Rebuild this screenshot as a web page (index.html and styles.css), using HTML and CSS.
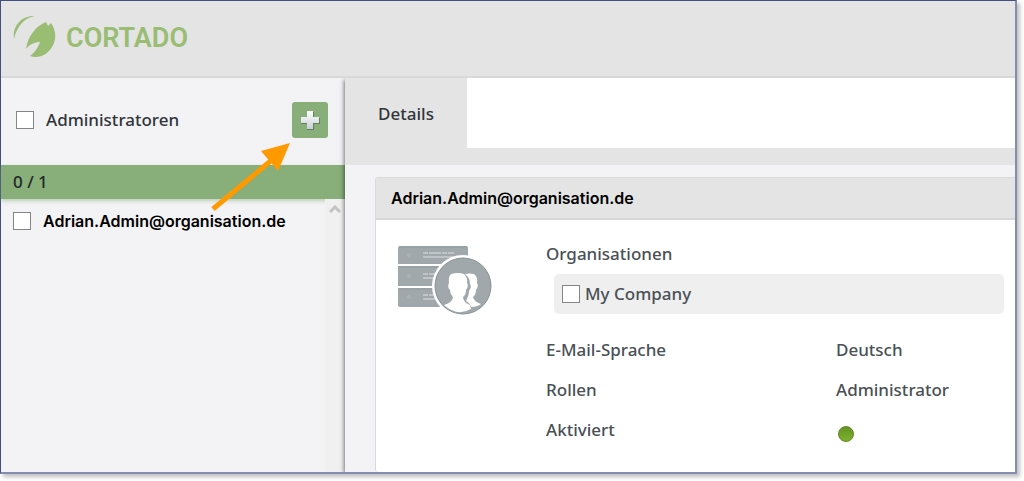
FILE: index.html
```html
<!DOCTYPE html>
<html lang="de">
<head>
    <meta charset="UTF-8">
    <meta name="viewport" content="width=device-width, initial-scale=1.0">
    <title>Cortado - Administratoren</title>
    <link rel="stylesheet" href="styles.css">
</head>
<body>
    <div class="window">
        <header class="header">
            <svg class="logo" viewBox="0 0 44 44" aria-hidden="true">
                <path fill="#99bd72" d="M1 25C-1 12 9 1 22 2C11 4 4 12 1 25Z"/>
                <path fill="#99bd72" d="M13 35C15 22 23 12 33 8L35 12L38 9C43 16 44 25 39 33C34 41 26 45 17 42C21 39 25 34 27 28C22 28 17 30 13 35Z"/>
            </svg>
            <span class="brand">CORTADO</span>
        </header>
        <div class="content">
            <aside class="sidebar">
                <div class="sidebar-top">
                    <label class="check"><input type="checkbox"> <span>Administratoren</span></label>
                    <button class="add" type="button" aria-label="Administrator hinzufügen">
                        <svg viewBox="0 0 20 20" aria-hidden="true">
                            <defs>
                                <linearGradient id="plus" x1="0" y1="0" x2="0" y2="1">
                                    <stop offset="0" stop-color="#fff"/>
                                    <stop offset="1" stop-color="#c9cfd6"/>
                                </linearGradient>
                            </defs>
                            <path fill="#536c4b" opacity="0.7" d="M7 2H14V8H20V14H14V20H7V14H1V8H7Z"/>
                            <path fill="url(#plus)" d="M7 1H13V7H19V13H13V19H7V13H1V7H7Z"/>
                        </svg>
                    </button>
                    <svg class="arrow" viewBox="0 0 80 70" aria-hidden="true">
                        <path stroke="#ff9900" stroke-width="5" d="M2 67L62 17"/>
                        <path fill="#ff9900" d="M79 1L50 9L67 29Z"/>
                    </svg>
                </div>
                <div class="counter">0 / 1</div>
                <div class="list">
                    <label class="check entry"><input type="checkbox"> <span>Adrian.Admin@organisation.de</span></label>
                    <div class="scrollbar">
                        <svg viewBox="0 0 12 8" aria-hidden="true">
                            <path fill="none" stroke="#c4c4c4" stroke-width="3" d="M1 7L6 2L11 7"/>
                        </svg>
                    </div>
                </div>
            </aside>
            <main class="main">
                <nav class="tabs">
                    <a class="tab" href="#details">Details</a>
                </nav>
                <section class="panel" id="details">
                    <h2>Adrian.Admin@organisation.de</h2>
                    <div class="panel-body">
                        <svg class="server" viewBox="0 0 96 72" aria-hidden="true">
                            <g fill="#a0a8ab">
                                <path d="M3 1H69Q71 1 71 3V19H1V3Q1 1 3 1Z"/>
                                <rect x="1" y="21" width="70" height="20"/>
                                <path d="M1 43H71V62H3Q1 62 1 60Z"/>
                            </g>
                            <path stroke="#929b9e" d="M2 2H70M2 22H70M2 44H70"/>
                            <g fill="#acb3b5">
                                <circle cx="12" cy="10" r="2"/>
                                <circle cx="12" cy="31" r="2"/>
                                <circle cx="12" cy="52" r="2"/>
                            </g>
                            <g stroke="#bfc5c7" stroke-width="2">
                                <path stroke-dasharray="5 1 12 1" d="M26 8H57M26 29H57M26 50H57"/>
                                <path d="M26 12H57M26 33H57M26 54H57"/>
                            </g>
                            <circle cx="66" cy="41" r="31" fill="#fff"/>
                            <circle cx="66" cy="41" r="28" fill="#a0a8ab" stroke="#899194"/>
                            <path fill="#fff" d="M68 29Q73 28 77 29Q81 32 80 38Q82 41 79 45Q79 50 76 52Q77 57 84 59Q80 62 74 62Q73 58 69 56Q72 50 72 46Q75 42 73 39Q73 33 68 29Z"/>
                            <path fill="#fff" d="M54 29Q61 27 67 29Q71 33 70 38Q72 41 69 45Q69 50 66 52Q66 57 73 60L74 64Q60 72 47 60Q56 57 56 52Q53 49 53 45Q50 42 52 38Q51 32 54 29Z"/>
                        </svg>
                        <div class="fields">
                            <fieldset class="orgs">
                                <legend>Organisationen</legend>
                                <label class="check company"><input type="checkbox"> <span>My Company</span></label>
                            </fieldset>
                            <dl class="info">
                                <dt>E-Mail-Sprache</dt>
                                <dd>Deutsch</dd>
                                <dt>Rollen</dt>
                                <dd>Administrator</dd>
                                <dt>Aktiviert</dt>
                                <dd><span class="status" role="img" aria-label="Ja"></span></dd>
                            </dl>
                        </div>
                    </div>
                </section>
            </main>
        </div>
    </div>
</body>
</html>
```
FILE: styles.css
```css
* {
    box-sizing: border-box;
}
body {
    margin: 0;
    padding: 0 7px 7px 0;
    min-height: 100vh;
    display: flex;
    background-color: #fff;
    font-family: "Noto Sans", "Open Sans", sans-serif;
    font-size: 17px;
    font-weight: 500;
    line-height: 24px;
    color: #4a5056;
}
.window {
    flex: 1;
    display: flex;
    flex-direction: column;
    border: 1px solid #444e80;
    border-right: 2px solid #858cae;
    border-bottom: 2px solid #858cae;
    box-shadow: 3px 3px 4px rgba(0, 0, 0, 0.25);
}
.header {
    display: flex;
    align-items: flex-start;
    gap: 9px;
    height: 77px;
    padding: 13px 12px;
    background-color: #e4e4e4;
    border-bottom: 2px solid #d8d8d8;
}
.logo {
    width: 44px;
    height: 44px;
}
.brand {
    font-family: Roboto, sans-serif;
    font-size: 27px;
    font-weight: 600;
    line-height: 48px;
    color: #99bd72;
}
.content {
    flex: 1;
    display: flex;
}
.sidebar {
    flex: 0 0 344px;
    display: flex;
    flex-direction: column;
    background-color: #f3f3f5;
}
.sidebar-top {
    position: relative;
    display: flex;
    justify-content: space-between;
    align-items: center;
    height: 87px;
    padding: 0 17px 3px 15px;
    color: #30353a;
}
.check {
    display: flex;
    align-items: center;
    gap: 12px;
}
.check input {
    appearance: none;
    width: 18px;
    height: 18px;
    margin: 0;
    border: 1px solid #858585;
    background-color: #fff;
}
.add {
    width: 36px;
    height: 36px;
    padding: 8px;
    border: none;
    border-radius: 3px;
    background-color: #88ae79;
    cursor: pointer;
}
.add svg {
    display: block;
    width: 20px;
    height: 20px;
}
.arrow {
    position: absolute;
    z-index: 2;
    top: 64px;
    right: 54px;
    width: 80px;
    height: 70px;
}
.counter {
    height: 34px;
    padding: 0 12px;
    line-height: 34px;
    color: #24282c;
    background-color: #88ae79;
    box-shadow: 0 2px 4px rgba(136, 174, 121, 0.5);
}
.list {
    flex: 1;
    display: flex;
    justify-content: space-between;
    align-items: stretch;
}
.entry {
    align-self: flex-start;
    padding: 10px 12px;
}
.entry span,
.panel h2 {
    font-family: Inter, sans-serif;
    font-size: 16px;
    font-weight: 600;
    color: #000;
}
.scrollbar {
    width: 20px;
    padding-top: 4px;
    text-align: center;
    line-height: 8px;
    background-color: #f0f0f0;
}
.scrollbar svg {
    width: 12px;
    height: 8px;
}
.main {
    position: relative;
    flex: 1;
    display: flex;
    flex-direction: column;
    background-color: #f3f3f5;
    box-shadow: -1px 2px 4px rgba(0, 0, 0, 0.5);
    clip-path: inset(0 0 0 -8px);
}
.tabs {
    display: flex;
    background-color: #fff;
    border-bottom: 17px solid #e4e4e4;
}
.tab {
    width: 122px;
    height: 70px;
    padding-top: 1px;
    text-align: center;
    line-height: 70px;
    color: #30353a;
    text-decoration: none;
    background-color: #e4e4e4;
}
.panel {
    flex: 1;
    margin: 12px 0 0 30px;
    border: 1px solid #dadada;
    border-right: none;
    border-bottom: none;
    border-radius: 3px 0 0 3px;
    background-color: #fff;
}
.panel h2 {
    margin: 0;
    padding: 0 15px;
    line-height: 40px;
    background-color: #e4e4e4;
    border-bottom: 2px solid #d8d8d8;
}
.panel-body {
    display: flex;
    gap: 53px;
    padding: 22px 11px 0 21px;
}
.server {
    flex: none;
    width: 96px;
    height: 72px;
    margin-top: 3px;
}
.fields {
    flex: 1;
}
.orgs {
    margin: 0;
    padding: 0;
    border: none;
}
.orgs legend {
    padding: 0;
}
.company {
    gap: 5px;
    height: 40px;
    margin: 8px 0 0 8px;
    padding: 0 8px;
    border-radius: 5px;
    background-color: #efefef;
}
.info {
    display: grid;
    grid-template-columns: 290px 1fr;
    row-gap: 16px;
    margin: 24px 0 0;
}
.info dd {
    margin: 0;
}
.status {
    display: block;
    width: 16px;
    height: 16px;
    margin: 8px 2px 0;
    border: 1px solid #5d8526;
    border-radius: 50%;
    background-image: linear-gradient(#659323, #7db22b);
}
```
